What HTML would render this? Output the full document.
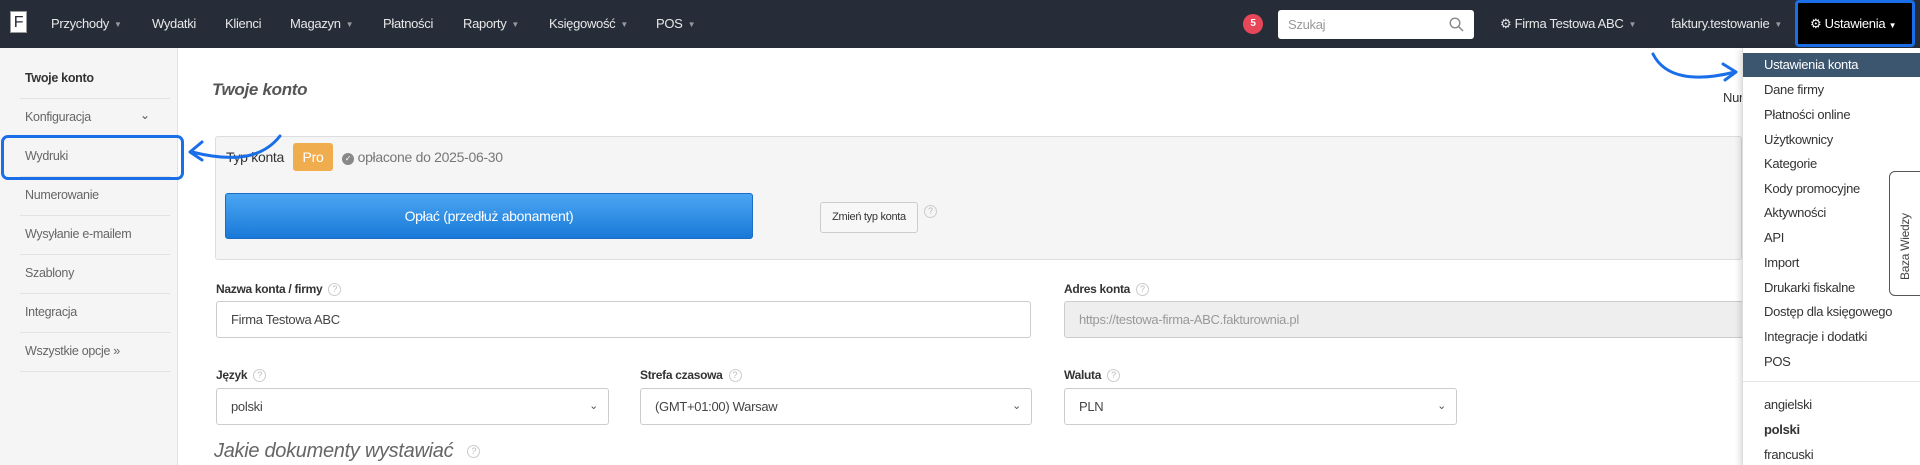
<!DOCTYPE html>
<html><head><meta charset="utf-8"><style>
*{box-sizing:border-box;margin:0;padding:0}
body{width:1920px;height:465px;overflow:hidden;background:#fff;font-family:"Liberation Sans",Arial,sans-serif;font-size:13px;color:#333;position:relative;letter-spacing:-0.3px}
.a{position:absolute;white-space:nowrap}
.nav{position:absolute;left:0;top:0;width:1920px;height:48px;background:#262d38}
.nav .a{color:#e8e8e8;font-size:13px;top:16px}
.car{font-size:8px;color:#999;margin-left:5px;vertical-align:1px}
.side{position:absolute;left:0;top:48px;width:178px;height:417px;background:#f5f5f5;border-right:1px solid #e2e2e2}
.side .a{left:25px;color:#666;font-size:12.5px}
.sep{position:absolute;left:20px;width:150px;height:1px;background:#e2e2e2}
.q{display:inline-block;width:13px;height:13px;border:1px solid #ccc;border-radius:50%;font-size:9px;color:#bbb;text-align:center;line-height:11px;margin-left:6px;vertical-align:middle;font-weight:normal;letter-spacing:0}
.lbl{font-weight:bold;font-size:12px;color:#333}
.inp{position:absolute;border:1px solid #ccc;border-radius:3px;background:#fff;font-size:13px;color:#444;padding-left:14px;line-height:35px}
.chev{position:absolute;right:10px;top:0;font-size:11px;color:#555}
.dd{position:absolute;left:1742px;top:48px;width:178px;height:417px;background:#fff;border-left:1px solid #ddd;box-shadow:-2px 2px 6px rgba(0,0,0,.15)}
.dd .a{left:21px;font-size:13px;color:#333}
</style></head><body>
<div class="nav">
  <div class="a" style="left:10px;top:11px;width:17px;height:22px;background:#fff;color:#262d38;font-size:16px;text-align:center;line-height:22px;border:1px solid #999">F</div>
  <div class="a" style="left:51px">Przychody<span class="car">▼</span></div>
  <div class="a" style="left:152px">Wydatki</div>
  <div class="a" style="left:225px">Klienci</div>
  <div class="a" style="left:290px">Magazyn<span class="car">▼</span></div>
  <div class="a" style="left:383px">Płatności</div>
  <div class="a" style="left:463px">Raporty<span class="car">▼</span></div>
  <div class="a" style="left:549px">Księgowość<span class="car">▼</span></div>
  <div class="a" style="left:656px">POS<span class="car">▼</span></div>
  <div class="a" style="left:1243px;top:14px;width:20px;height:20px;border-radius:50%;background:#e8475a;color:#fff;font-size:10px;font-weight:bold;text-align:center;line-height:20px">5</div>
  <div class="a" style="left:1278px;top:10px;width:196px;height:29px;background:#fff;border-radius:3px;color:#999;line-height:29px;padding-left:10px">Szukaj
    <svg style="position:absolute;right:10px;top:7px" width="15" height="15" viewBox="0 0 15 15"><circle cx="6" cy="6" r="4.8" fill="none" stroke="#888" stroke-width="1.4"/><path d="M9.5 9.5L14 14" stroke="#888" stroke-width="1.5"/></svg></div>
  <div class="a" style="left:1500px">⚙︎ Firma Testowa ABC<span class="car">▼</span></div>
  <div class="a" style="left:1671px">faktury.testowanie<span class="car">▼</span></div>
  <div class="a" style="left:1795px;top:0;width:120px;height:47px;background:#000;border:3px solid #1a6fe8;border-radius:4px;color:#fff;line-height:41px;padding-left:12px">⚙ Ustawienia <span style="font-size:8px;color:#fff">▼</span></div>
</div>
<div class="side">
  <div class="a" style="top:23px;font-weight:bold;color:#333">Twoje konto</div>
  <div class="sep" style="top:50px"></div>
  <div class="a" style="top:62px">Konfiguracja</div>
  <div class="a" style="left:140px;top:60px;color:#555;font-size:12px">⌄</div>
  <div class="sep" style="top:89px"></div>
  <div class="a" style="top:101px">Wydruki</div>
  <div class="sep" style="top:128px"></div>
  <div class="a" style="top:140px">Numerowanie</div>
  <div class="sep" style="top:167px"></div>
  <div class="a" style="top:179px">Wysyłanie e-mailem</div>
  <div class="sep" style="top:206px"></div>
  <div class="a" style="top:218px">Szablony</div>
  <div class="sep" style="top:245px"></div>
  <div class="a" style="top:257px">Integracja</div>
  <div class="sep" style="top:284px"></div>
  <div class="a" style="top:296px">Wszystkie opcje »</div>
  <div class="sep" style="top:323px"></div>
</div>
<div class="a" style="left:1px;top:135px;width:183px;height:45px;border:3px solid #1a6fe8;border-radius:7px"></div>
<div class="a" style="left:212px;top:80px;font-size:17px;font-style:italic;font-weight:bold;color:#555">Twoje konto</div>
<div class="a" style="left:1723px;top:90px;font-size:13px">Nur</div>
<div class="a" style="left:215px;top:136px;width:1527px;height:124px;background:#f5f5f5;border:1px solid #ddd;border-radius:3px"></div>
<div class="a" style="left:226px;top:149px;font-size:14px">Typ konta</div>
<div class="a" style="left:293px;top:143px;width:40px;height:28px;background:#f0ad4e;color:#fff;font-size:14px;text-align:center;line-height:28px;border-radius:3px">Pro</div>
<div class="a" style="left:342px;top:149px;font-size:14px;color:#777"><span style="display:inline-block;width:12px;height:12px;border-radius:50%;background:#888;color:#fff;font-size:8px;text-align:center;line-height:12px;vertical-align:1px">✓</span> opłacone do 2025-06-30</div>
<div class="a" style="left:225px;top:193px;width:528px;height:46px;background:linear-gradient(#4ba6f2,#1979d8);border:1px solid #1a6cc4;border-radius:3px;color:#fff;font-size:14px;text-align:center;line-height:44px">Opłać (przedłuż abonament)</div>
<div class="a" style="left:820px;top:202px;width:98px;height:31px;background:#f7f7f7;border:1px solid #ccc;border-radius:3px;font-size:11px;text-align:center;line-height:29px">Zmień typ konta</div>
<div class="a" style="left:918px;top:203px"><span class="q">?</span></div>
<div class="a lbl" style="left:216px;top:282px">Nazwa konta / firmy<span class="q">?</span></div>
<div class="a lbl" style="left:1064px;top:282px">Adres konta<span class="q">?</span></div>
<div class="inp" style="left:216px;top:301px;width:815px;height:37px">Firma Testowa ABC</div>
<div class="inp" style="left:1064px;top:301px;width:700px;height:37px;background:#eee;color:#999">https://testowa-firma-ABC.fakturownia.pl</div>
<div class="a lbl" style="left:216px;top:368px">Język<span class="q">?</span></div>
<div class="a lbl" style="left:640px;top:368px">Strefa czasowa<span class="q">?</span></div>
<div class="a lbl" style="left:1064px;top:368px">Waluta<span class="q">?</span></div>
<div class="inp" style="left:216px;top:388px;width:393px;height:37px">polski<span class="chev">⌄</span></div>
<div class="inp" style="left:640px;top:388px;width:392px;height:37px">(GMT+01:00) Warsaw<span class="chev">⌄</span></div>
<div class="inp" style="left:1064px;top:388px;width:393px;height:37px">PLN<span class="chev">⌄</span></div>
<div class="a" style="left:214px;top:440px;font-size:20px;font-style:italic;color:#666">Jakie dokumenty wystawiać<span class="q" style="margin-left:14px">?</span></div>
<svg class="a" style="left:180px;top:130px" width="110" height="60" viewBox="0 0 110 60"><path d="M100 6 C85 25 60 34 12 22" fill="none" stroke="#1a6fe8" stroke-width="3" stroke-linecap="round"/><path d="M22 12 L10 22 L22 30" fill="none" stroke="#1a6fe8" stroke-width="3" stroke-linecap="round" stroke-linejoin="round"/></svg>
<svg class="a" style="left:1645px;top:50px" width="100" height="40" viewBox="0 0 100 40"><path d="M8 4 C20 28 50 32 90 22" fill="none" stroke="#1a6fe8" stroke-width="3" stroke-linecap="round"/><path d="M78 14 L91 22 L80 30" fill="none" stroke="#1a6fe8" stroke-width="3" stroke-linecap="round" stroke-linejoin="round"/></svg>
<div class="dd">
  <div class="a" style="left:0;top:5px;width:178px;height:24px;background:#3d5670"></div>
  <div class="a" style="top:9px;color:#fff">Ustawienia konta</div>
  <div class="a" style="top:34px">Dane firmy</div>
  <div class="a" style="top:59px">Płatności online</div>
  <div class="a" style="top:84px">Użytkownicy</div>
  <div class="a" style="top:108px">Kategorie</div>
  <div class="a" style="top:133px">Kody promocyjne</div>
  <div class="a" style="top:157px">Aktywności</div>
  <div class="a" style="top:182px">API</div>
  <div class="a" style="top:207px">Import</div>
  <div class="a" style="top:232px">Drukarki fiskalne</div>
  <div class="a" style="top:256px">Dostęp dla księgowego</div>
  <div class="a" style="top:281px">Integracje i dodatki</div>
  <div class="a" style="top:306px">POS</div>
  <div class="a" style="left:0;top:333px;width:178px;height:1px;background:#e5e5e5"></div>
  <div class="a" style="top:349px">angielski</div>
  <div class="a" style="top:374px;font-weight:bold">polski</div>
  <div class="a" style="top:399px">francuski</div>
</div>
<div class="a" style="left:1889px;top:171px;width:35px;height:125px;background:#fff;border:1px solid #555;border-radius:6px 0 0 6px"><div style="position:absolute;left:8px;top:108px;transform:rotate(-90deg);transform-origin:0 0;font-size:12px;color:#444;white-space:nowrap">Baza Wiedzy</div></div>
</body></html>
